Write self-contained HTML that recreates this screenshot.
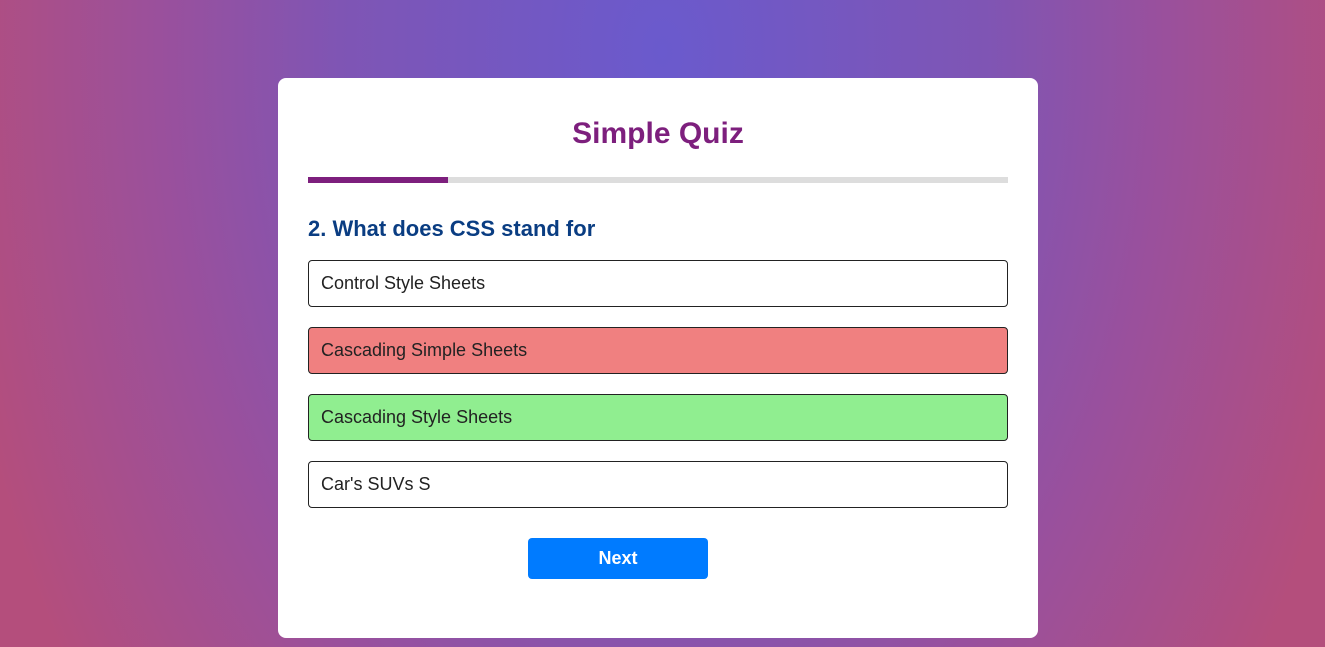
<!DOCTYPE html>
<html><head><meta charset="utf-8"><style>
html,body{margin:0;padding:0;width:1325px;height:647px;overflow:hidden}
body{background:radial-gradient(ellipse 720px 1100px at 50% 8%,#6a5acd 0%,#7f55b4 45%,#9a509c 70%,#b44e7c 100%);font-family:"Liberation Sans",Arial,sans-serif;position:relative}
.card{position:absolute;left:278px;top:78px;width:760px;height:560px;background:#fff;border-radius:8px}
h1{position:absolute;top:39px;left:0;width:760px;text-align:center;margin:0;font-size:30px;color:#7d1f7d;font-weight:bold}
.bar{position:absolute;left:30px;top:99px;width:700px;height:6px;background:#ddd}
.bar div{width:140px;height:6px;background:#7d1f7d}
h2{position:absolute;left:30px;top:138px;margin:0;font-size:22px;color:#0a3d82;font-weight:bold}
.opt{position:absolute;left:30px;width:686px;height:45px;border:1px solid #222;border-radius:4px;font-size:18px;line-height:45px;padding-left:12px;box-sizing:content-box;color:#222}
.btn{position:absolute;left:250px;top:460px;width:180px;height:41px;background:#007bff;border-radius:4px;color:#fff;font-weight:bold;font-size:18px;text-align:center;line-height:41px}
</style></head><body>
<div class="card">
<h1>Simple Quiz</h1>
<div class="bar"><div></div></div>
<h2>2. What does CSS stand for</h2>
<div class="opt" style="top:182px">Control Style Sheets</div>
<div class="opt" style="top:249px;background:#f08080">Cascading Simple Sheets</div>
<div class="opt" style="top:316px;background:#90ee90">Cascading Style Sheets</div>
<div class="opt" style="top:383px">Car's SUVs S</div>
<div class="btn">Next</div>
</div>
</body></html>
